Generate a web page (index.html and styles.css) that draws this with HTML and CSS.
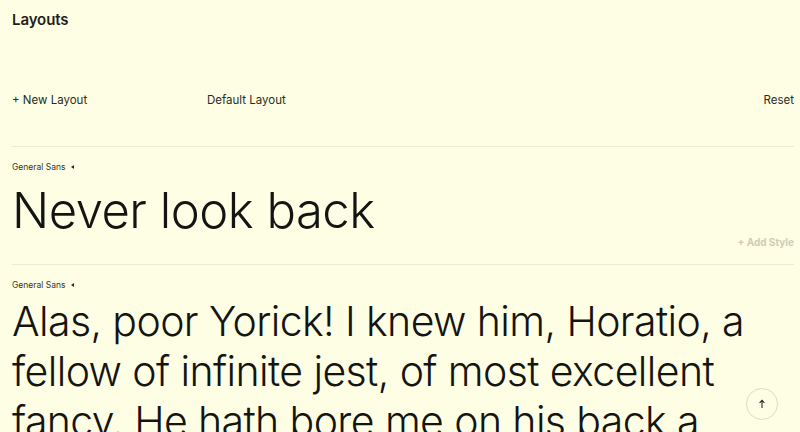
FILE: index.html
```html
<!DOCTYPE html>
<html>
<head>
<meta charset="utf-8">
<link rel="stylesheet" href="styles.css">
</head>
<body>
<div class="page">
  <h1 class="title">Layouts</h1>
  <div class="toolbar">
    <span class="tool">+ New Layout</span>
    <span class="tool">Default Layout</span>
    <span class="tool reset">Reset</span>
  </div>
  <section class="style-block">
    <div class="font-label">General Sans <span class="caret"></span></div>
    <div class="sample sample-lg">Never look back</div>
    <div class="add-style">+ Add Style</div>
  </section>
  <section class="style-block last">
    <div class="font-label">General Sans <span class="caret"></span></div>
    <div class="sample sample-md">Alas, poor Yorick! I knew him, Horatio, a fellow of infinite jest, of most excellent fancy. He hath bore me on his back a thousand times.</div>
  </section>
  <button class="to-top" aria-label="Back to top">
    <svg width="10" height="10" viewBox="0 0 10 10"><path d="M5 9V1.5M2.6 3.8L5 1.3 7.4 3.8" fill="none" stroke="#2a2a24" stroke-width="1.1"/></svg>
  </button>
</div>
</body>
</html>
```
FILE: styles.css
```css
html, body {
  margin: 0;
  padding: 0;
  background: #fefee4;
  height: 100%;
  overflow: hidden;
}
body {
  font-family: Inter, "Noto Sans", sans-serif;
  color: #1e1e1a;
}
.page {
  padding: 0 6px 0 12px;
  position: relative;
  height: 432px;
  overflow: hidden;
}
.title {
  margin: 0;
  padding-top: 11px;
  font-size: 15px;
  font-weight: 600;
  line-height: 18px;
  letter-spacing: -0.1px;
}
.toolbar {
  display: grid;
  grid-template-columns: 195px 1fr auto;
  margin-top: 63px;
  font-size: 11.5px;
  line-height: 16px;
  color: #2a2a24;
  padding-bottom: 38px;
  border-bottom: 1px solid #ebead2;
}
.style-block {
  padding-top: 14px;
  border-bottom: 1px solid #ebead2;
}
.style-block.last { border-bottom: none; }
.font-label {
  font-size: 8.5px;
  line-height: 12px;
  color: #33332c;
  display: flex;
  align-items: center;
  gap: 6px;
}
.caret {
  width: 0;
  height: 0;
  border-top: 2.5px solid transparent;
  border-bottom: 2.5px solid transparent;
  border-right: 3.5px solid #2a2a24;
}
.sample {
  font-weight: 300;
  color: #141412;
}
.sample-lg {
  font-size: 49px;
  line-height: 60px;
  margin-top: 8px;
  letter-spacing: -0.5px;
}
.sample-md {
  font-size: 41px;
  line-height: 50px;
  margin-top: 5px;
  letter-spacing: -0.6px;
}
.add-style {
  text-align: right;
  font-size: 10px;
  font-weight: 700;
  color: #cfcdb6;
  line-height: 14px;
  margin-top: -6px;
  padding-bottom: 15px;
}
.to-top {
  position: absolute;
  left: 746px;
  top: 388px;
  width: 32px;
  height: 32px;
  border-radius: 50%;
  border: 1px solid #dddcc4;
  background: #fefee4;
  display: flex;
  align-items: center;
  justify-content: center;
  padding: 0;
}
```
